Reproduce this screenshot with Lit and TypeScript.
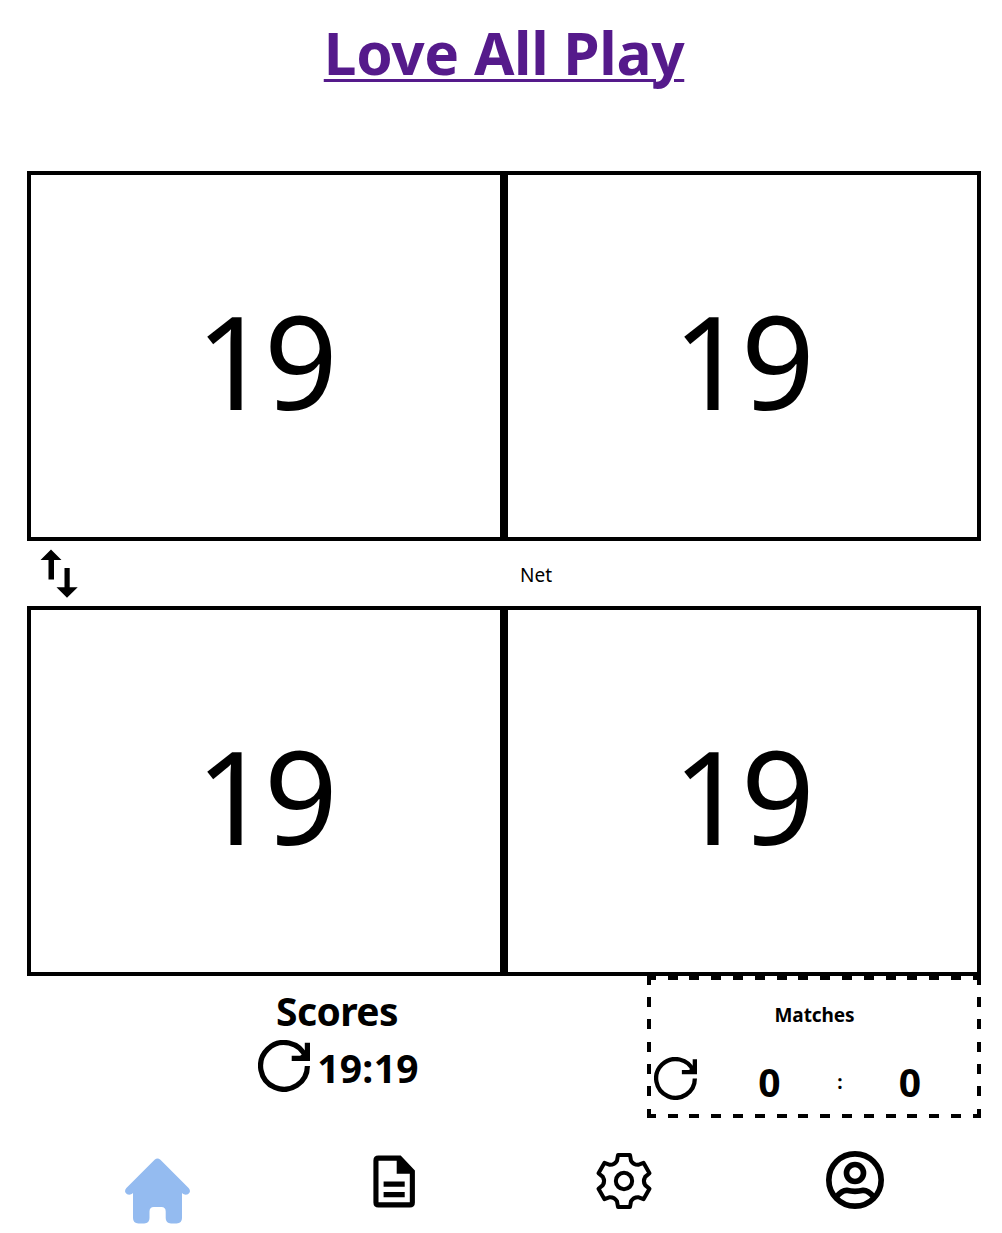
import { LitElement, html, css, svg } from "lit";
import { customElement, property, state } from "lit/decorators.js";

const gearPath = (() => {
  const corner: [number, number][] = [[18, -78], [21, -61], [28, -48.5], [42.3, -48.7], [58.5, -54.6]];
  let d = "";
  for (let i = 0; i < 6; i++) {
    const a = (i * Math.PI) / 3;
    const p = corner.map(([x, y]) =>
      `${(x * Math.cos(a) - y * Math.sin(a)).toFixed(1)} ${(x * Math.sin(a) + y * Math.cos(a)).toFixed(1)}`);
    d += `${i ? "L" : "M"}${p[0]}L${p[1]}Q${p[2]} ${p[3]}L${p[4]}`;
  }
  return d + "Z";
})();

const refreshShape = svg`
  <path d="M49.4 26A23.4 23.4 0 1 1 47.8 17.4" fill="none" stroke="#000" stroke-width="5.2"/>
  <path d="M46.8 2.7H52v18.2H33.7v-5.1H42L46.8 13z"/>`;

@customElement("court-box")
export class CourtBox extends LitElement {
  @property({ type: Number }) score = 0;
  static styles = css`
    :host {
      display: flex;
      box-sizing: border-box;
      height: 370px;
      border: 4px solid #000;
      align-items: center;
      justify-content: center;
    }
    .value {
      font-size: 129px;
      line-height: 170px;
      letter-spacing: -5.5px;
      padding: 7px 3px 0 0;
    }
  `;
  render() {
    return html`<span class="value">${this.score}</span>`;
  }
}

@customElement("app-root")
export class AppRoot extends LitElement {
  @state() private home = 19;
  @state() private away = 19;

  static styles = css`
    :host {
      display: block;
      box-sizing: border-box;
      height: 1233px;
      padding: 0 21px 0 27px;
      overflow: hidden;
      background: #fff;
      color: #000;
      font-family: "Noto Sans", "Open Sans", sans-serif;
    }
    svg { display: block; flex: none; }
    .header { height: 171px; text-align: center; }
    .title {
      margin: 0;
      padding-top: 12px;
      font-size: 58.5px;
      line-height: 80px;
      font-weight: 700;
      letter-spacing: -0.3px;
      white-space: nowrap;
    }
    .title a {
      color: #551a8b;
      text-decoration: underline;
      text-decoration-thickness: 3px;
      text-underline-offset: 4px;
    }
    .half { display: grid; grid-template-columns: 1fr 1fr; }
    .net { display: flex; height: 65px; align-items: center; }
    .swap { margin-bottom: 2px; }
    .net-label { flex: 1; text-align: center; font-size: 19px; line-height: 26px; padding-top: 3px; }
    .summary { display: flex; height: 142px; }
    .scores { flex: 1; display: flex; flex-direction: column; align-items: center; }
    .scores-title { font-size: 39px; line-height: 50px; font-weight: 700; padding-top: 10px; letter-spacing: -0.6px; }
    .scores-row { display: flex; align-items: center; gap: 7px; height: 60px; padding-left: 3px; }
    .scores-value { font-size: 39px; line-height: 50px; font-weight: 700; padding-top: 4px; letter-spacing: 0.3px; }
    .matches {
      box-sizing: border-box;
      width: 334px;
      padding: 4px;
      font-weight: 700;
      --dash-x: #000 0 10px, transparent 10px 21.8px;
      --dash-y: #000 0 10px, transparent 10px 22.3px;
      background-image:
        repeating-linear-gradient(90deg, var(--dash-x)),
        repeating-linear-gradient(90deg, var(--dash-x)),
        repeating-linear-gradient(180deg, var(--dash-y)),
        repeating-linear-gradient(180deg, var(--dash-y));
      background-repeat: no-repeat;
      background-size: 340px 4px, 340px 4px, 4px 150px, 4px 150px;
      background-position: -1.2px 0, -1.2px 138px, 0 -1.2px, 330px -1.2px;
    }
    .matches-title { text-align: center; font-size: 19px; line-height: 26px; padding: 22px 0 0 1px; letter-spacing: -0.1px; }
    .matches-row { display: grid; grid-template-columns: 80px 71px 70px 70px; align-items: center; padding: 22px 0 0 3px; }
    .matches-num { font-size: 39px; line-height: 50px; text-align: center; padding-top: 7px; }
    .matches-sep { font-size: 19px; text-align: center; padding-top: 6px; }
    .nav { display: flex; padding: 33px 0 0 98px; align-items: flex-start; }
    .home { margin-top: 7px; }
    .doc { margin: 4px 0 0 183px; }
    .gear { margin: 1px 0 0 180px; }
    .user { margin: 0 0 0 173px; }
  `;

  private half(a: number, b: number) {
    return html`<div class="half">
      <court-box .score=${a}></court-box>
      <court-box .score=${b}></court-box>
    </div>`;
  }

  render() {
    return html`
      <header class="header">
        <h1 class="title"><a>Love All Play</a></h1>
      </header>
      ${this.half(this.home, this.home)}
      <div class="net">
        <svg class="swap" width="64" height="62" viewBox="0 0 64 62">
          <path d="M24 7.5 34.5 18H27v19.5h-5.5V18h-8zM37.5 26h5.2v19.2h8L40 55.7 29.5 45.2h8z"/>
        </svg>
        <span class="net-label">Net</span>
      </div>
      ${this.half(this.away, this.away)}
      <div class="summary">
        <div class="scores">
          <div class="scores-title">Scores</div>
          <div class="scores-row">
            <svg width="52" height="52" viewBox="0 0 52 52">${refreshShape}</svg>
            <span class="scores-value">${this.home}:${this.away}</span>
          </div>
        </div>
        <div class="matches">
          <div class="matches-title">Matches</div>
          <div class="matches-row">
            <svg width="43" height="43" viewBox="0 0 52 52">${refreshShape}</svg>
            <span class="matches-num">0</span>
            <span class="matches-sep">:</span>
            <span class="matches-num">0</span>
          </div>
        </div>
      </div>
      <nav class="nav">
        <svg class="home" width="65" height="66" viewBox="0 0 65 66">
          <path fill="#94bbf0" d="M29.6 1.8Q32.5-.8 35.4 1.8L63.6 30Q65.8 32.4 64.4 34.8C63 37.2 59.5 37.6 57 35.1V60Q57 65.4 51.6 65.4H46Q40.7 65.4 40.7 60V53.5Q40.7 49 36.4 49H28.8Q24.5 49 24.5 53.5V60Q24.5 65.4 19.2 65.4H13.4Q8 65.4 8 60V35.1C5.5 37.6 2 37.2.6 34.8Q-.8 32.4 1.4 30Z"/>
        </svg>
        <svg class="doc" width="42" height="53" viewBox="-0.4 -0.4 42 53">
          <path fill-rule="evenodd" d="M5 0H27.3L41.5 15V47Q41.5 52 36.5 52H5Q0 52 0 47V5Q0 0 5 0ZM5.1 5.3V46.8H36.4V18.3H23.3V5.3ZM10.2 26.2H31.3V31.3H10.2ZM10.2 36.6H31.3V41.8H10.2Z"/>
        </svg>
        <svg class="gear" width="58" height="58" viewBox="-87 -87 174 174">
          <g fill="none" stroke="#000" stroke-width="12" stroke-linejoin="round">
            <path d=${gearPath}/>
            <circle r="24.5"/>
          </g>
        </svg>
        <svg class="user" width="58" height="58" viewBox="48 33 174 174">
          <g fill="none" stroke="#000" stroke-width="17">
            <circle cx="135" cy="120" r="78.5"/>
            <circle cx="135" cy="99" r="25.5"/>
            <path d="M78 172Q95 151 110 151Q135 157 160 151Q175 151 192 172"/>
          </g>
        </svg>
      </nav>
    `;
  }
}
